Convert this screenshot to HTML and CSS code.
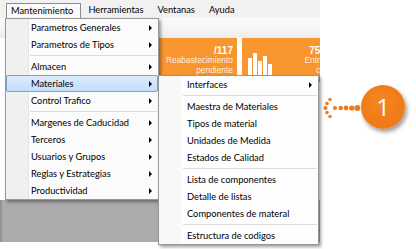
FILE: index.html
```html
<!DOCTYPE html>
<html lang="es">
<head>
<meta charset="utf-8">
<title>Mantenimiento</title>
<link rel="stylesheet" href="styles.css">
</head>
<body>
<div class="screen">
  <div class="app">
    <div class="menubar">
      <span class="mitem open">Mantenimiento</span>
      <span class="mitem">Herramientas</span>
      <span class="mitem">Ventanas</span>
      <span class="mitem">Ayuda</span>
    </div>
    <div class="toolbar"></div>
    <div class="dash">
      <div class="tiles">
        <div class="tile">
          <svg class="chart" width="25" height="24" viewBox="0 0 25 24"><rect x="0" y="5" width="4" height="19"/><rect x="5" y="0" width="4" height="24"/><rect x="10" y="8" width="4" height="16"/><rect x="15" y="3" width="4" height="21"/><rect x="20" y="11" width="4" height="13"/></svg>
          <div class="tile-text"><b>/117</b><span>Reabastecimiento</span><span>pendiente</span></div>
        </div>
        <div class="tile">
          <svg class="chart" width="25" height="24" viewBox="0 0 25 24"><rect x="0" y="5" width="4" height="19"/><rect x="5" y="0" width="4" height="24"/><rect x="10" y="8" width="4" height="16"/><rect x="15" y="3" width="4" height="21"/><rect x="20" y="11" width="4" height="13"/></svg>
          <div class="tile-text"><b>757/1320</b><span>Entregas sin</span><span>confirmar</span></div>
        </div>
      </div>
    </div>
    <div class="ground"></div>
  </div>

  <div class="menu main">
    <div class="mi has">Parametros Generales</div>
    <div class="mi has">Parametros de Tipos</div>
    <div class="sep"></div>
    <div class="mi has">Almacen</div>
    <div class="mi has hl">Materiales</div>
    <div class="mi has">Control Trafico</div>
    <div class="sep"></div>
    <div class="mi has">Margenes de Caducidad</div>
    <div class="mi has">Terceros</div>
    <div class="mi has">Usuarios y Grupos</div>
    <div class="mi has">Reglas y Estrategias</div>
    <div class="mi has">Productividad</div>
  </div>

  <div class="menu sub">
    <div class="mi has">Interfaces</div>
    <div class="sep"></div>
    <div class="mi">Maestra de Materiales</div>
    <div class="mi">Tipos de material</div>
    <div class="mi">Unidades de Medida</div>
    <div class="mi">Estados de Calidad</div>
    <div class="sep"></div>
    <div class="mi">Lista de componentes</div>
    <div class="mi">Detalle de listas</div>
    <div class="mi">Componentes de materal</div>
    <div class="sep"></div>
    <div class="mi">Estructura de codigos</div>
  </div>

  <svg class="pointer" width="40" height="24" viewBox="0 0 40 24">
    <circle cx="8" cy="3.5" r="1.7"/>
    <circle cx="5" cy="7.5" r="1.8"/>
    <circle cx="3.5" cy="12" r="2"/>
    <circle cx="5" cy="16.5" r="1.8"/>
    <circle cx="8" cy="20.5" r="1.7"/>
    <circle cx="13" cy="12" r="2"/>
    <circle cx="18.7" cy="12" r="2.2"/>
    <circle cx="24" cy="12" r="2.4"/>
    <circle cx="29.7" cy="12" r="2.6"/>
    <circle cx="35.3" cy="12" r="3"/>
  </svg>
  <div class="callout">1</div>
</div>
</body>
</html>
```

FILE: styles.css
```css
html, body {
  margin: 0;
  padding: 0;
  background: #ffffff;
}

.screen {
  position: relative;
  width: 416px;
  height: 249px;
  font-family: Lato, "Liberation Sans", sans-serif;
  font-size: 9.3px;
  color: #000;
}

.app {
  width: 320px;
  height: 242px;
  display: flex;
  flex-direction: column;
  background: #ababab;
}

.menubar {
  height: 18px;
  box-sizing: border-box;
  display: flex;
  align-items: flex-end;
  padding-left: 6px;
  background: #f1f1f1;
}

.mitem {
  height: 15px;
  line-height: 14px;
  padding: 0 7px;
  box-sizing: border-box;
}

.mitem.open {
  border: 1px solid #8c8c8c;
  border-bottom: none;
  background: #fbfbfb;
  padding: 0 7px 0 4px;
}

.toolbar {
  height: 20px;
  background: linear-gradient(#fbfbfb, #f4f4f4 60%, #ececec);
}

.dash {
  height: 162px;
  background: #ffffff;
}

.tiles {
  display: flex;
  gap: 5px;
  padding-left: 124px;
  width: 320px;
  box-sizing: border-box;
  overflow: hidden;
}

.tile {
  flex: 0 0 113px;
  height: 44px;
  box-sizing: border-box;
  background: #f8952f;
  display: flex;
  justify-content: space-between;
  padding: 0 4px 0 6px;
}

.chart {
  align-self: flex-end;
  margin-bottom: 5px;
  fill: #ffffff;
}

.tile-text {
  display: flex;
  flex-direction: column;
  align-items: flex-end;
  padding-top: 7px;
  font-family: "Liberation Sans", Arial, sans-serif;
  color: rgba(255, 255, 255, 0.88);
}

.tile-text b {
  font-size: 10px;
  line-height: 11px;
  color: #ffffff;
}

.tile-text span {
  font-size: 8.4px;
  line-height: 9.5px;
}

.ground {
  flex: 1;
  border-left: 2px solid #939393;
}

.menu {
  position: absolute;
  box-sizing: border-box;
  border: 1px solid #979797;
  box-shadow: 2px 2px 3px rgba(0, 0, 0, 0.38);
}

.menu.main {
  left: 5px;
  top: 18px;
  width: 154px;
  background: linear-gradient(to right, #f0f0f0 0, #f0f0f0 22px, #e2e3e3 22px, #e2e3e3 23px, #ffffff 23px, #ffffff 24px, #fbfbfb 24px);
  z-index: 2;
}

.menu.sub {
  left: 158px;
  top: 75px;
  width: 161px;
  background: linear-gradient(to right, #f8f8f8 0, #f8f8f8 22px, #fdfdfd 22px);
  z-index: 3;
}

.mi {
  height: 17px;
  box-sizing: border-box;
  display: flex;
  align-items: center;
  padding: 0 6px 0 25px;
  white-space: nowrap;
}

.menu.sub .mi {
  padding-left: 28px;
}

.mi.has::after {
  content: "";
  margin-left: auto;
  width: 0;
  height: 0;
  border-left: 3px solid #000;
  border-top: 3px solid transparent;
  border-bottom: 3px solid transparent;
}

.mi.hl {
  background: linear-gradient(#dcebfc, #c4defb);
  border: 1px solid #7da2ce;
  border-radius: 2px;
  padding-left: 24px;
  padding-right: 5px;
}

.sep {
  height: 5px;
  display: flex;
  align-items: center;
  padding: 0 1px 0 24px;
}

.sep::before {
  content: "";
  flex: 1;
  height: 1px;
  background: #dcdcdc;
  box-shadow: 0 1px 0 #ffffff;
}

.pointer {
  position: absolute;
  left: 322px;
  top: 96px;
  fill: #ee7a1c;
}

.callout {
  position: absolute;
  left: 361px;
  top: 85px;
  width: 44px;
  height: 44px;
  border-radius: 50%;
  background: radial-gradient(circle at 45% 40%, #f5861f, #ec7414);
  box-shadow: 2px 3px 4px rgba(0, 0, 0, 0.4);
  color: #ffffff;
  font-family: "Open Sans", sans-serif;
  font-size: 24px;
  line-height: 44px;
  text-align: center;
}
```
